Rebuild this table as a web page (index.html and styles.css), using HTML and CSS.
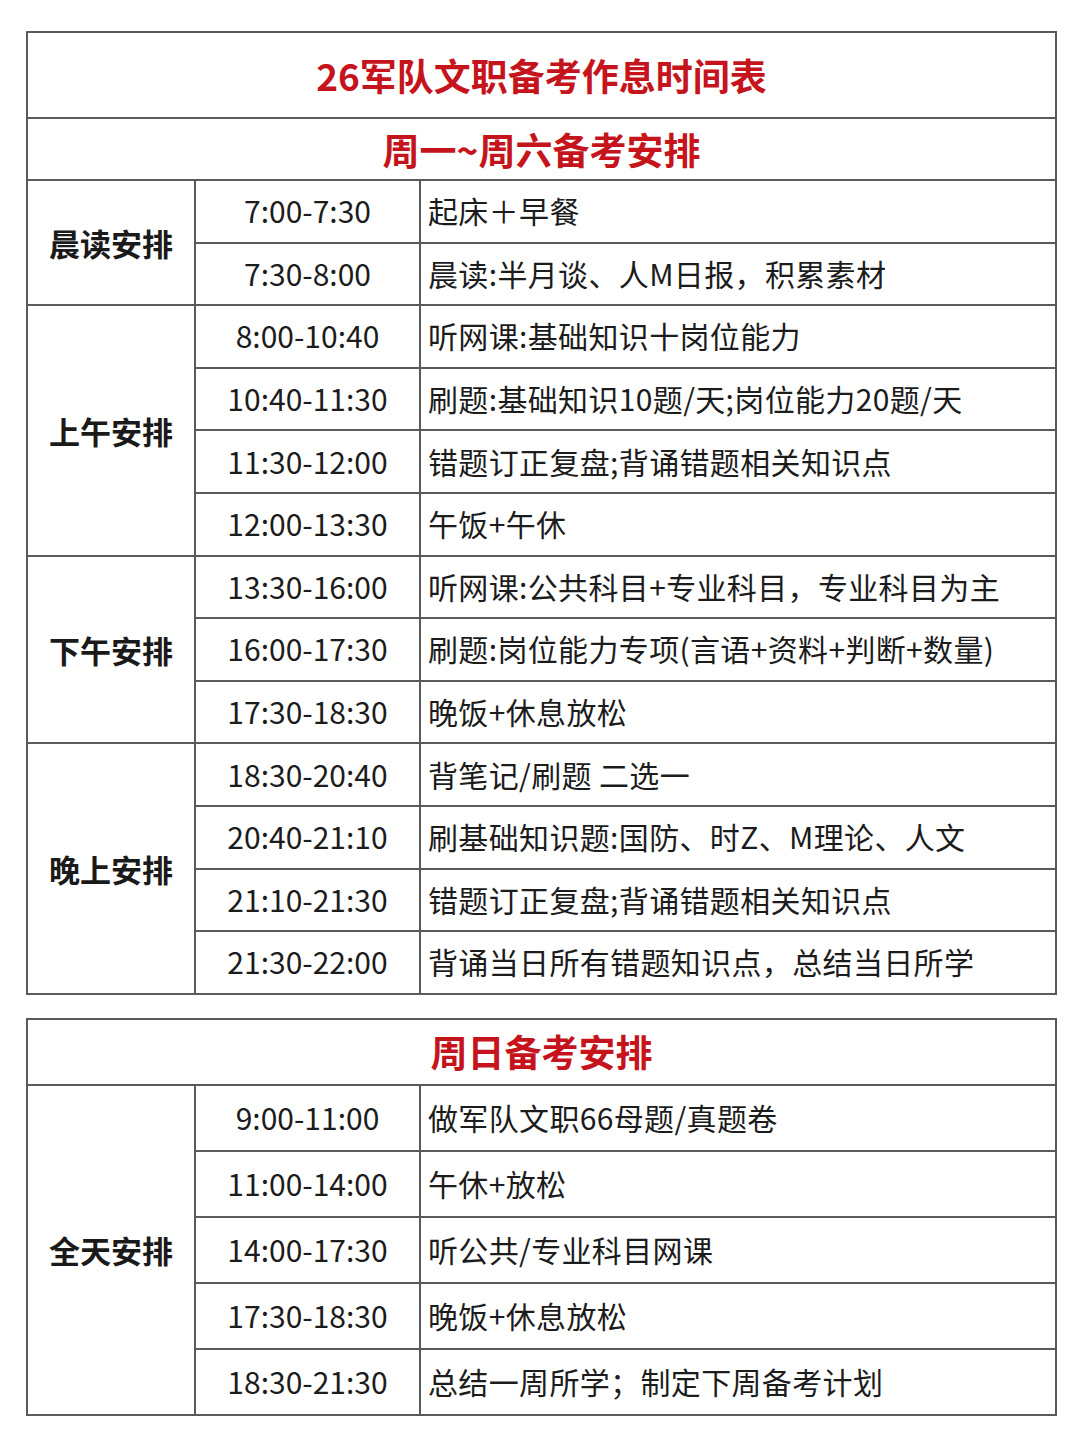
FILE: index.html
```html
<!DOCTYPE html>
<html lang="zh-CN">
<head>
<meta charset="utf-8">
<title>26军队文职备考作息时间表</title>
<link rel="stylesheet" href="styles.css">
</head>
<body>
<div class="page">
  <table class="sched week">
    <colgroup><col class="c1"><col class="c2"><col class="c3"></colgroup>
    <tr class="title-row"><td colspan="3" class="title">26军队文职备考作息时间表</td></tr>
    <tr class="sub-row"><td colspan="3" class="subtitle">周一~周六备考安排</td></tr>
    <tr><td rowspan="2" class="label">晨读安排</td><td class="time">7:00-7:30</td><td class="task">起床＋早餐</td></tr>
    <tr><td class="time">7:30-8:00</td><td class="task">晨读:半月谈、人M日报，积累素材</td></tr>
    <tr><td rowspan="4" class="label">上午安排</td><td class="time">8:00-10:40</td><td class="task">听网课:基础知识十岗位能力</td></tr>
    <tr><td class="time">10:40-11:30</td><td class="task">刷题:基础知识10题/天;岗位能力20题/天</td></tr>
    <tr><td class="time">11:30-12:00</td><td class="task">错题订正复盘;背诵错题相关知识点</td></tr>
    <tr><td class="time">12:00-13:30</td><td class="task">午饭+午休</td></tr>
    <tr><td rowspan="3" class="label">下午安排</td><td class="time">13:30-16:00</td><td class="task">听网课:公共科目+专业科目，专业科目为主</td></tr>
    <tr><td class="time">16:00-17:30</td><td class="task">刷题:岗位能力专项(言语+资料+判断+数量)</td></tr>
    <tr><td class="time">17:30-18:30</td><td class="task">晚饭+休息放松</td></tr>
    <tr><td rowspan="4" class="label">晚上安排</td><td class="time">18:30-20:40</td><td class="task">背笔记/刷题 二选一</td></tr>
    <tr><td class="time">20:40-21:10</td><td class="task">刷基础知识题:国防、时Z、M理论、人文</td></tr>
    <tr><td class="time">21:10-21:30</td><td class="task">错题订正复盘;背诵错题相关知识点</td></tr>
    <tr><td class="time">21:30-22:00</td><td class="task">背诵当日所有错题知识点，总结当日所学</td></tr>
  </table>

  <table class="sched sun">
    <colgroup><col class="c1"><col class="c2"><col class="c3"></colgroup>
    <tr class="sub-row"><td colspan="3" class="subtitle">周日备考安排</td></tr>
    <tr><td rowspan="5" class="label">全天安排</td><td class="time">9:00-11:00</td><td class="task">做军队文职66母题/真题卷</td></tr>
    <tr><td class="time">11:00-14:00</td><td class="task">午休+放松</td></tr>
    <tr><td class="time">14:00-17:30</td><td class="task">听公共/专业科目网课</td></tr>
    <tr><td class="time">17:30-18:30</td><td class="task">晚饭+休息放松</td></tr>
    <tr><td class="time">18:30-21:30</td><td class="task">总结一周所学；制定下周备考计划</td></tr>
  </table>
</div>
</body>
</html>
```

FILE: styles.css
```css
html, body {
  margin: 0;
  padding: 0;
  background: #ffffff;
}

body {
  font-family: "Noto Sans CJK SC", "Noto Sans", sans-serif;
  color: #1c1c1c;
}

.page {
  padding: 31px 24px 0 26px;
  display: flex;
  flex-direction: column;
  gap: 23px;
}

.sched {
  border-collapse: collapse;
  width: 1029px;
  table-layout: fixed;
}

.sched td {
  border: 2px solid #5a5a5a;
  padding: 0;
  vertical-align: middle;
}

.c1 { width: 168px; }
.c2 { width: 225px; }
.c3 { width: 636px; }

.week tr { height: 62.6px; }
.week .title-row { height: 86px; }
.week .sub-row { height: 62px; }
.sun tr { height: 66px; }

.title,
.subtitle {
  text-align: center;
  color: #c5141c;
  font-weight: 700;
  font-size: 37px;
  line-height: 1;
}

.title { padding-bottom: 2px; }

.label {
  text-align: center;
  font-weight: 700;
  font-size: 31px;
  color: #1a1a1a;
}

.time {
  text-align: center;
  font-size: 30px;
  color: #1c1c1c;
  padding-bottom: 2px !important;
}

.task {
  font-size: 30px;
  letter-spacing: 0.35px;
  padding: 0 0 2px 7px !important;
  color: #1c1c1c;
  white-space: nowrap;
}
```
